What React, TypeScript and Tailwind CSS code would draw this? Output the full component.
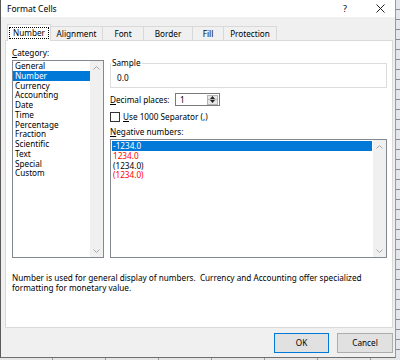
import React from "react";

function Chev({ up }: { up?: boolean }) {
  return (
    <svg width="7" height="4" viewBox="0 0 7 4">
      <polyline
        points={up ? "0.5,3.5 3.5,0.5 6.5,3.5" : "0.5,0.5 3.5,3.5 6.5,0.5"}
        fill="none"
        stroke="#a6a6a6"
        strokeWidth="1"
      />
    </svg>
  );
}

function ScrollCol() {
  return (
    <div className="w-[13px] bg-[#f0f0f0] flex flex-col justify-between">
      <div className="h-[13px] flex items-center justify-center">
        <Chev up />
      </div>
      <div className="h-[13px] flex items-center justify-center">
        <Chev />
      </div>
    </div>
  );
}

const categories = [
  "General",
  "Number",
  "Currency",
  "Accounting",
  "Date",
  "Time",
  "Percentage",
  "Fraction",
  "Scientific",
  "Text",
  "Special",
  "Custom",
];

export default function App() {
  return (
    <div className="w-[400px] h-[360px] flex flex-col bg-[#d9d9d9] font-['Noto_Sans',sans-serif] text-[8.2px] text-black overflow-hidden">
      <div className="flex h-[358px]">
        <div className="w-[396px] h-[358px] flex flex-col bg-[#f0f0f0] border-l border-r border-b border-l-[#5a5a5a] border-r-[#9a9a9a] border-b-[#6f6f6f]">
          {/* Title bar */}
          <div className="h-[17px] bg-white flex items-center">
            <span className="ml-[6px] text-[8.5px] leading-[10px]">Format Cells</span>
            <span className="ml-auto mr-[29px] text-[9px] leading-[10px]">?</span>
            <svg width="9" height="9" viewBox="0 0 9 9" className="mr-[10px]">
              <path d="M0.5 0.5 L8.5 8.5 M8.5 0.5 L0.5 8.5" stroke="#222" strokeWidth="1" />
            </svg>
          </div>

          {/* Tabs */}
          <div className="mt-[7px] h-[16px] flex items-end ml-[6px] relative z-10 leading-[10px]">
            <div className="w-[44px] h-[17px] -mb-px bg-white border-t border-l border-r border-[#d9d9d9] flex items-center justify-center">
              <span className="border border-dotted border-black px-[3px] h-[12px] flex items-center">Number</span>
            </div>
            <div className="w-[52px] h-[14px] border-t border-r border-[#d9d9d9] flex items-center justify-center">
              Alignment
            </div>
            <div className="w-[41px] h-[14px] border-t border-r border-[#d9d9d9] flex items-center justify-center">
              Font
            </div>
            <div className="w-[49px] h-[14px] border-t border-r border-[#d9d9d9] flex items-center justify-center">
              Border
            </div>
            <div className="w-[31px] h-[14px] border-t border-r border-[#d9d9d9] flex items-center justify-center">
              Fill
            </div>
            <div className="w-[53px] h-[14px] border-t border-r border-[#d9d9d9] flex items-center justify-center">
              Protection
            </div>
          </div>

          {/* Panel */}
          <div className="ml-[4px] w-[388px] h-[288px] bg-white border border-[#d9d9d9] flex flex-col pl-[6px] pr-[5px] pt-[7px] leading-[10px]">
            <div className="flex gap-[6px]">
              {/* Category */}
              <div className="w-[92px] flex flex-col">
                <div className="h-[10px]">
                  <span className="underline underline-offset-[1px]">C</span>ategory:
                </div>
                <div className="mt-[2px] h-[198px] border border-[#828790] flex bg-white">
                  <div className="flex-1 flex flex-col">
                    {categories.map((c) =>
                      c === "Number" ? (
                        <div key={c} className="h-[9.75px] leading-[9.75px] pl-[2px] bg-[#0078d7] text-white">
                          {c}
                        </div>
                      ) : (
                        <div key={c} className="h-[9.75px] leading-[9.75px] pl-[2px]">
                          {c}
                        </div>
                      )
                    )}
                  </div>
                  <ScrollCol />
                </div>
              </div>

              {/* Right side */}
              <div className="w-[277px] flex flex-col">
                <div className="mt-[15px] h-[25px] border border-[#dcdcdc] relative pl-[6px] pt-[9px]">
                  <span className="absolute left-0 -top-[6px] bg-white px-px leading-[10px]">Sample</span>
                  0.0
                </div>

                <div className="mt-[5px] h-[13px] flex items-center">
                  <div className="w-[65px]">
                    <span className="underline underline-offset-[1px]">D</span>ecimal places:
                  </div>
                  <div className="w-[45px] h-[13px] border border-[#7a7a7a] bg-white flex items-center">
                    <span className="pl-[4px] flex-1">1</span>
                    <div className="w-[11px] h-[10px] mr-px bg-[#e6e6e6] border border-[#b4b4b4] flex flex-col">
                      <div className="flex-1 flex items-center justify-center border-b border-[#b4b4b4]">
                        <svg width="5" height="3" viewBox="0 0 5 3">
                          <polygon points="0,3 2.5,0 5,3" fill="#222" />
                        </svg>
                      </div>
                      <div className="flex-1 flex items-center justify-center">
                        <svg width="5" height="3" viewBox="0 0 5 3">
                          <polygon points="0,0 2.5,3 5,0" fill="#222" />
                        </svg>
                      </div>
                    </div>
                  </div>
                </div>

                <div className="mt-[6px] h-[10px] flex items-center">
                  <div className="w-[10px] h-[10px] border border-[#333] bg-white" />
                  <span className="ml-[3px]">
                    <span className="underline underline-offset-[1px]">U</span>se 1000 Separator (,)
                  </span>
                </div>

                <div className="mt-[5px] h-[10px]">
                  <span className="underline underline-offset-[1px]">N</span>egative numbers:
                </div>

                <div className="mt-[2px] h-[119px] border border-[#828790] flex bg-white">
                  <div className="flex-1 flex flex-col p-px">
                    <div className="h-[9.75px] leading-[9.75px] pl-px bg-[#0078d7] text-white">-1234.0</div>
                    <div className="h-[9.75px] leading-[9.75px] pl-px text-[#ff0000]">1234.0</div>
                    <div className="h-[9.75px] leading-[9.75px] pl-px">(1234.0)</div>
                    <div className="h-[9.75px] leading-[9.75px] pl-px text-[#ff0000]">(1234.0)</div>
                  </div>
                  <ScrollCol />
                </div>
              </div>
            </div>

            <div className="mt-[15px] whitespace-pre leading-[10px]">
              {"Number is used for general display of numbers.  Currency and Accounting offer specialized"}
              <br />
              {"formatting for monetary value."}
            </div>
          </div>

          {/* Buttons */}
          <div className="mt-[5px] flex justify-end gap-[8px] mr-[2px]">
            <button className="w-[55px] h-[20px] bg-[#e1e1e1] border border-[#0078d7] text-[8.2px] leading-[10px]">
              OK
            </button>
            <button className="w-[56px] h-[20px] bg-[#e1e1e1] border border-[#adadad] text-[8.2px] leading-[10px]">
              Cancel
            </button>
          </div>
        </div>
        <div className="flex-1 bg-[repeating-linear-gradient(to_bottom,#e4e8ee_0px,#e4e8ee_9px,#8a8a8a_9px,#8a8a8a_10px)]" />
      </div>
      <div className="h-[2px] bg-[repeating-linear-gradient(to_right,#e6e6e6_0px,#e6e6e6_52px,#9a9a9a_52px,#9a9a9a_53px)]" />
    </div>
  );
}
